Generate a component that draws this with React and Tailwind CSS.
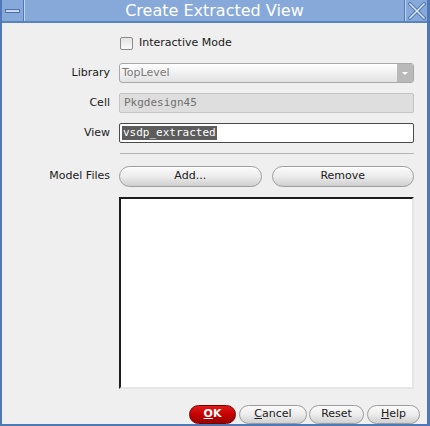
import React from "react";

const sans = { fontFamily: '"DejaVu Sans", Verdana, sans-serif' };
const mono = { fontFamily: '"DejaVu Sans Mono", monospace' };

function Label({ children }) {
  return (
    <div className="w-[109px] pr-[1px] text-right text-[11px] text-[#202020] shrink-0">
      {children}
    </div>
  );
}

function PillButton({ children, className = "" }) {
  return (
    <button
      className={
        "h-[21px] rounded-full border border-[#9c9c9c] bg-gradient-to-b from-[#fbfbfb] via-[#ececec] to-[#cfcfcf] text-[11px] text-[#202020] shadow-[inset_0_1px_0_#ffffff] " +
        className
      }
    >
      {children}
    </button>
  );
}

function FooterButton({ children, className = "" }) {
  return (
    <button
      className={
        "h-[19px] rounded-full border border-[#9c9c9c] bg-gradient-to-b from-[#fbfbfb] via-[#ececec] to-[#d0d0d0] text-[11px] text-[#202020] " +
        className
      }
    >
      {children}
    </button>
  );
}

export default function App() {
  return (
    <div
      className="w-[430px] h-[426px] bg-[#efefef] flex flex-col border-l-2 border-r-[3px] border-b-2 border-[#4f78b6] overflow-hidden"
      style={sans}
    >
      {/* title bar */}
      <div className="h-[23px] flex bg-[#86a9d9] border-b-2 border-[#5a82bd] shrink-0">
        <div className="w-[22px] flex items-center justify-center border-r border-[#4f78b6]">
          <div className="w-[15px] h-[4px] bg-[#c9d8ee] border border-[#4f72a8]" />
        </div>
        <div className="w-px bg-[#c3d5ee]" />
        <div className="flex-1 flex items-center justify-center text-[16px] text-white leading-none">
          Create Extracted View
        </div>
        <div className="w-px bg-[#4f78b6]" />
        <div className="w-[22px] flex items-center justify-center border-l border-[#c3d5ee]">
          <svg width="18" height="18" viewBox="0 0 18 18">
            <path d="M2 2 L16 16 M16 2 L2 16" stroke="#5077b3" strokeWidth="3.4" strokeLinecap="square" />
            <path d="M2 2 L16 16 M16 2 L2 16" stroke="#dce7f6" strokeWidth="1.5" strokeLinecap="square" />
          </svg>
        </div>
      </div>

      {/* body */}
      <div className="flex flex-col pr-[13px]">
        <div className="flex items-center mt-[14px] h-[13px]">
          <div className="w-[118px] shrink-0" />
          <div className="w-[13px] h-[13px] border border-[#8a8a8a] rounded-[2px] bg-gradient-to-b from-[#e4e4e4] to-[#fafafa]" />
          <span className="ml-[6px] text-[11px] text-[#202020]">Interactive Mode</span>
        </div>

        <div className="flex items-center mt-[13px] h-[20px] gap-[8px]">
          <Label>Library</Label>
          <div className="flex-1 h-[20px] flex rounded-[3px] border border-[#a8a8a8] bg-gradient-to-b from-[#ffffff] to-[#e2e2e2] overflow-hidden">
            <div className="flex-1 flex items-center pl-[2px] text-[11px] text-[#7a7a7a]">TopLevel</div>
            <div className="w-[16px] bg-[#b9b9b9] flex items-center justify-center">
              <div className="w-0 h-0 border-l-[3px] border-r-[3px] border-t-[3px] border-l-transparent border-r-transparent border-t-white" />
            </div>
          </div>
        </div>

        <div className="flex items-center mt-[10px] h-[20px] gap-[8px]">
          <Label>Cell</Label>
          <div
            className="flex-1 h-[20px] flex items-center pl-[4px] rounded-[2px] border border-[#c4c4c4] bg-[#dedede] text-[11px] text-[#707070]"
            style={mono}
          >
            Pkgdesign45
          </div>
        </div>

        <div className="flex items-center mt-[10px] h-[20px] gap-[8px]">
          <Label>View</Label>
          <div className="flex-1 h-[20px] flex items-center pl-[2px] rounded-[2px] border border-[#4a4a4a] bg-white text-[11px]" style={mono}>
            <span className="bg-[#5c5c5c] text-white px-[1px] leading-[14px]">vsdp_extracted</span>
          </div>
        </div>

        <div className="mt-[10px] ml-[118px] h-px bg-[#b4b4b4]" />

        <div className="flex items-center mt-[12px] gap-[8px]">
          <Label>Model Files</Label>
          <div className="flex-1 flex gap-[10px]">
            <PillButton className="flex-1">Add...</PillButton>
            <PillButton className="flex-1">Remove</PillButton>
          </div>
        </div>

        <div className="mt-[10px] ml-[117px] h-[192px] bg-white border-t-2 border-l-2 border-t-[#1c1c1c] border-l-[#1c1c1c] border-r-2 border-b-2 border-r-[#e6e6e6] border-b-[#e6e6e6]" />

        <div className="flex justify-end items-center mt-[16px]">
          <button className="w-[47px] h-[19px] rounded-full border border-[#7a0000] bg-gradient-to-b from-[#e01818] via-[#c40000] to-[#9a0000] text-[11px] font-bold text-white">
            <span className="underline">O</span>K
          </button>
          <FooterButton className="w-[68px] ml-[3px]">
            <span className="underline">C</span>ancel
          </FooterButton>
          <FooterButton className="w-[55px] ml-[2px]">Reset</FooterButton>
          <FooterButton className="w-[53px] ml-[3px] mr-[-6px]">
            <span className="underline">H</span>elp
          </FooterButton>
        </div>
      </div>
    </div>
  );
}
